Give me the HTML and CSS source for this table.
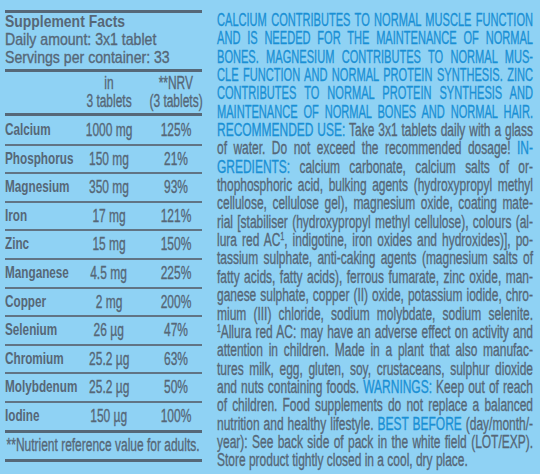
FILE: index.html
```html
<!DOCTYPE html>
<html lang="en">
<head>
    <meta charset="UTF-8">
    <meta name="viewport" content="width=device-width, initial-scale=1.0">
    <title>Supplement Facts</title>
    <link rel="stylesheet" href="styles.css">
</head>
<body>
    <div class="label">
        <div class="facts">
            <div class="facts-head">
                <div><span class="cond-wide facts-title">Supplement Facts</span></div>
                <div><span class="cond-wide">Daily amount: 3x1 tablet</span></div>
                <div><span class="cond-wide">Servings per container: 33</span></div>
            </div>
            <div class="facts-cols">
                <div class="cell col-amount"><span class="cond">in</span></div>
                <div class="cell col-nrv"><span class="cond">**NRV</span></div>
                <div class="cell col-amount"><span class="cond">3 tablets</span></div>
                <div class="cell col-nrv"><span class="cond">(3 tablets)</span></div>
            </div>
            <div class="facts-rows">
                <div class="row"><span class="name"><span class="cond-bold">Calcium</span></span><span class="cell"><span class="cond">1000 mg</span></span><span class="cell nrv"><span class="cond">125%</span></span></div>
                <div class="row"><span class="name"><span class="cond-bold">Phosphorus</span></span><span class="cell"><span class="cond">150 mg</span></span><span class="cell nrv"><span class="cond">21%</span></span></div>
                <div class="row"><span class="name"><span class="cond-bold">Magnesium</span></span><span class="cell"><span class="cond">350 mg</span></span><span class="cell nrv"><span class="cond">93%</span></span></div>
                <div class="row"><span class="name"><span class="cond-bold">Iron</span></span><span class="cell"><span class="cond">17 mg</span></span><span class="cell nrv"><span class="cond">121%</span></span></div>
                <div class="row"><span class="name"><span class="cond-bold">Zinc</span></span><span class="cell"><span class="cond">15 mg</span></span><span class="cell nrv"><span class="cond">150%</span></span></div>
                <div class="row"><span class="name"><span class="cond-bold">Manganese</span></span><span class="cell"><span class="cond">4.5 mg</span></span><span class="cell nrv"><span class="cond">225%</span></span></div>
                <div class="row"><span class="name"><span class="cond-bold">Copper</span></span><span class="cell"><span class="cond">2 mg</span></span><span class="cell nrv"><span class="cond">200%</span></span></div>
                <div class="row"><span class="name"><span class="cond-bold">Selenium</span></span><span class="cell"><span class="cond">26 µg</span></span><span class="cell nrv"><span class="cond">47%</span></span></div>
                <div class="row"><span class="name"><span class="cond-bold">Chromium</span></span><span class="cell"><span class="cond">25.2 µg</span></span><span class="cell nrv"><span class="cond">63%</span></span></div>
                <div class="row"><span class="name"><span class="cond-bold">Molybdenum</span></span><span class="cell"><span class="cond">25.2 µg</span></span><span class="cell nrv"><span class="cond">50%</span></span></div>
                <div class="row"><span class="name"><span class="cond-bold">Iodine</span></span><span class="cell"><span class="cond">150 µg</span></span><span class="cell nrv"><span class="cond">100%</span></span></div>
            </div>
            <div class="facts-note"><span class="cond">**Nutrient reference value for adults.</span></div>
        </div>

        <div class="info">
            <div class="claims">
                <span class="ln">CALCIUM CONTRIBUTES TO NORMAL MUSCLE FUNCTION</span>
                <span class="ln">AND IS NEEDED FOR THE MAINTENANCE OF NORMAL</span>
                <span class="ln">BONES. MAGNESIUM CONTRIBUTES TO NORMAL MUS-</span>
                <span class="ln">CLE FUNCTION AND NORMAL PROTEIN SYNTHESIS. ZINC</span>
                <span class="ln">CONTRIBUTES TO NORMAL PROTEIN SYNTHESIS AND</span>
                <span class="ln">MAINTENANCE OF NORMAL BONES AND NORMAL HAIR.</span>
            </div>
            <div class="text">
                <span class="ln"><b>RECOMMENDED USE:</b> Take 3x1 tablets daily with a glass</span>
                <span class="ln">of water. Do not exceed the recommended dosage! <b>IN-</b></span>
                <span class="ln"><b>GREDIENTS:</b> calcium carbonate, calcium salts of or-</span>
                <span class="ln">thophosphoric acid, bulking agents (hydroxypropyl methyl</span>
                <span class="ln">cellulose, cellulose gel), magnesium oxide, coating mate-</span>
                <span class="ln">rial [stabiliser (hydroxypropyl methyl cellulose), colours (al-</span>
                <span class="ln">lura red AC<sup>1</sup>, indigotine, iron oxides and hydroxides)], po-</span>
                <span class="ln">tassium sulphate, anti-caking agents (magnesium salts of</span>
                <span class="ln">fatty acids, fatty acids), ferrous fumarate, zinc oxide, man-</span>
                <span class="ln">ganese sulphate, copper (II) oxide, potassium iodide, chro-</span>
                <span class="ln">mium (III) chloride, sodium molybdate, sodium selenite.</span>
                <span class="ln"><sup>1</sup>Allura red AC: may have an adverse effect on activity and</span>
                <span class="ln">attention in children. Made in a plant that also manufac-</span>
                <span class="ln">tures milk, egg, gluten, soy, crustaceans, sulphur dioxide</span>
                <span class="ln">and nuts containing foods. <b>WARNINGS:</b> Keep out of reach</span>
                <span class="ln">of children. Food supplements do not replace a balanced</span>
                <span class="ln">nutrition and healthy lifestyle. <b>BEST BEFORE</b> (day/month/-</span>
                <span class="ln">year): See back side of pack in the white field (LOT/EXP).</span>
                <span class="ln last">Store product tightly closed in a cool, dry place.</span>
            </div>
        </div>
    </div>
</body>
</html>
```

FILE: styles.css
```css
body {
    margin: 0;
    background-color: #8fd2f4;
    color: #566777;
    font-family: "Liberation Sans", Arial, sans-serif;
    -webkit-text-stroke: 0.35px currentColor;
    width: 540px;
    height: 474px;
    overflow: hidden;
}

.label {
    display: flex;
    gap: 15px;
    padding: 10px 0 0 5px;
}

/* the print uses a condensed face: squeeze the glyphs horizontally */
.cond, .cond-wide, .cond-bold {
    display: inline-block;
    white-space: nowrap;
}

.cond-wide {
    transform: scaleX(0.83);
    transform-origin: 0 50%;
}

.cond {
    transform: scaleX(0.665);
    transform-origin: 50% 50%;
}

.cond-bold {
    font-weight: 700;
    -webkit-text-stroke: 0;
    transform: scaleX(0.69);
    transform-origin: 0 50%;
}

/* left: supplement facts table */
.facts {
    width: 197px;
    flex-shrink: 0;
    border-top: 3px solid #566878;
    font-size: 17px;
}

.facts-head {
    line-height: 18px;
    padding-bottom: 2px;
    border-bottom: 3px solid #566878;
}

.facts-title {
    font-weight: 700;
    -webkit-text-stroke: 0;
    transform: scaleX(0.82);
}

.facts-cols {
    display: grid;
    grid-template-columns: 76px 56px 65px;
    font-size: 18px;
    line-height: 17.5px;
    padding: 3px 0;
    border-bottom: 3px solid #566878;
}

.cell {
    display: flex;
    justify-content: center;
    text-align: center;
}

.col-amount {
    grid-column: 2;
}

.col-nrv, .nrv {
    grid-column: 3;
    padding-left: 13px;
}

.row {
    display: grid;
    grid-template-columns: 76px 56px 65px;
    font-size: 18px;
    line-height: 26.6px;
    padding-top: 1px;
    margin-bottom: -1px;
    border-bottom: 2px solid #617484;
}

.row:last-child {
    border-bottom: 3px solid #566878;
}

.name {
    font-size: 17px;
}

.facts-note {
    display: flex;
    justify-content: center;
    font-size: 18px;
    line-height: 27px;
    border-bottom: 3px solid #566878;
}

/* right: claims and ingredients */
.info {
    width: 316px;
    font-size: 18px;
    line-height: 18.35px;
    padding-top: 1px;
}

.claims {
    width: calc(316px / 0.615);
    transform: scaleX(0.615);
    transform-origin: 0 0;
    color: #1a90d5;
}

.text {
    width: calc(316px / 0.665);
    transform: scaleX(0.665);
    transform-origin: 0 0;
}

.ln {
    display: block;
    text-align: justify;
    text-align-last: justify;
    white-space: nowrap;
}

.ln.last {
    text-align-last: left;
}

.text b {
    font-weight: 400;
    color: #1a90d5;
}

.text sup {
    font-size: 10px;
    line-height: 0;
    vertical-align: 6px;
}
```
